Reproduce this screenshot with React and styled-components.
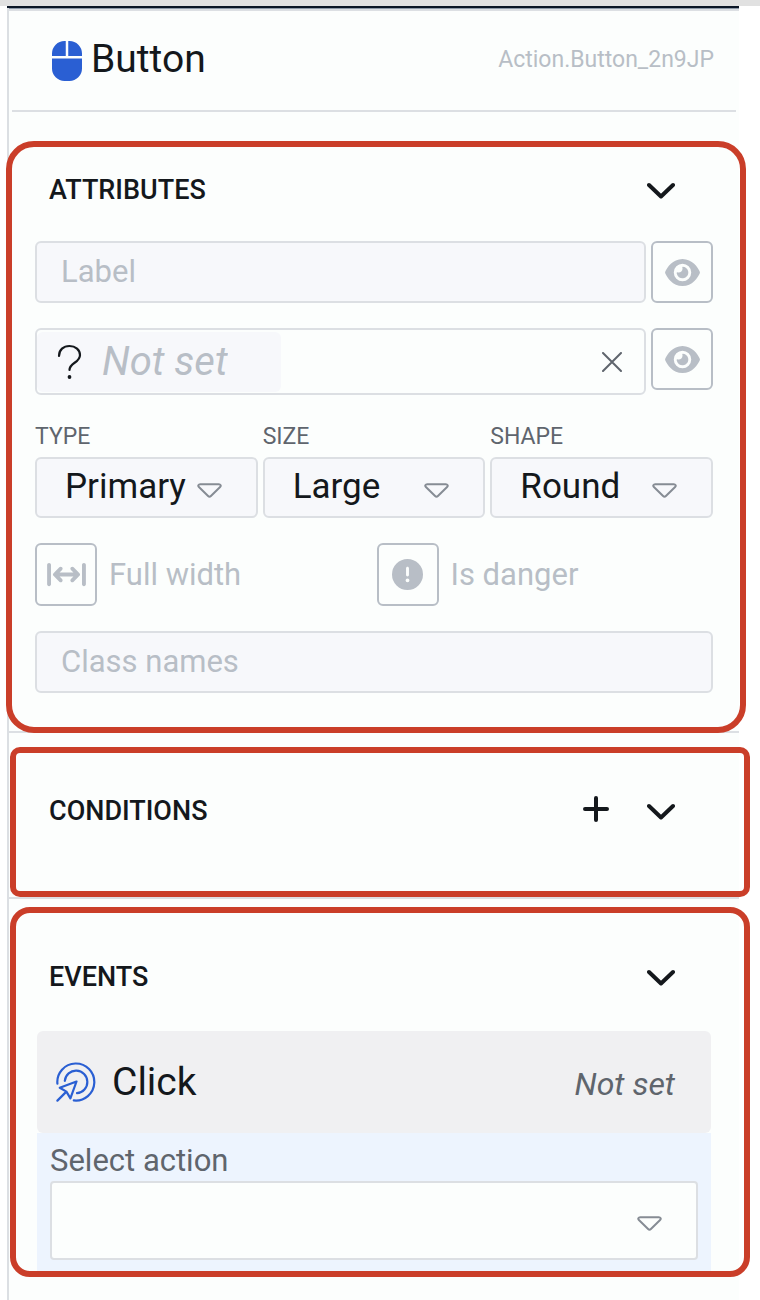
import React from "react";
import styled, { createGlobalStyle } from "styled-components";
import { FaEye, FaCircleExclamation, FaArrowsLeftRightToLine } from "react-icons/fa6";

const GlobalStyle = createGlobalStyle`
  *, *::before, *::after { box-sizing: border-box; }
  body { margin: 0; background: #ffffff; color: #14181c; font-family: Roboto, "Liberation Sans", sans-serif; }
  button, input, select { font: inherit; color: inherit; margin: 0; }
`;

const Page = styled.div`
  display: flex;
  flex-direction: column;
  min-height: 100vh;
  border-top: 6px solid #e1e1e1;
  padding: 0 21px 0 7px;
  overflow-x: clip;
`;

const TopEdge = styled.div`
  height: 2px;
  background: #0b1626;
`;

const Panel = styled.main`
  flex: 1;
  background: #fcfefd;
  border-left: 2px solid #dcdfe3;
  box-shadow: inset 0 1px #8d99a8, inset 0 3px #dcdfe3;
`;

const PanelHeader = styled.header`
  display: flex;
  align-items: center;
  justify-content: space-between;
  height: 104px;
  margin: 0 3px;
  padding: 0 22px 0 40px;
  border-bottom: 2px solid #dcdfe3;
`;

const PanelTitle = styled.h1`
  display: flex;
  align-items: center;
  gap: 9px;
  margin: 0;
  font-size: 39px;
  font-weight: 400;
  line-height: 48px;
  svg { margin-top: 4px; }
`;

const ComponentId = styled.span`
  padding-top: 2px;
  font-size: 23px;
  line-height: 32px;
  color: #b8bec6;
`;

const Section = styled.section`
  position: relative;
  padding: 46px 26px ${(p) => p.$bottom}px;
  border-bottom: ${(p) => (p.$last ? 0 : 2)}px solid #dcdfe3;

  &::after {
    content: "";
    position: absolute;
    z-index: 1;
    inset: ${(p) => p.$frame};
    border: 6px solid #ca3e29;
    border-radius: ${(p) => p.$radius}px;
    pointer-events: none;
  }
`;

const SectionHeader = styled.div`
  display: flex;
  align-items: center;
  height: 64px;
  padding: 0 32px 0 14px;
`;

const SectionTitle = styled.h2`
  flex: 1;
  margin: 0;
  font-size: 27px;
  font-weight: 500;
  line-height: 32px;
`;

const PlainButton = styled.button`
  display: grid;
  place-items: center;
  width: 40px;
  height: 40px;
  margin-left: ${(p) => p.$gap || 0}px;
  padding: 0;
  border: 0;
  background: none;
  color: ${(p) => p.$color || "#14181c"};
`;

const Fields = styled.div`
  display: grid;
  gap: 25px;
  padding-top: 19px;
`;

const Row = styled.div`
  display: flex;
  align-items: flex-start;
  gap: 5px;
`;

const TextInput = styled.input`
  flex: 1;
  min-width: 0;
  width: 100%;
  height: 62px;
  padding: 0 24px 2px;
  border: 2px solid #dcdfe3;
  border-radius: 6px;
  background: #f7f8fb;
  font-size: 31px;
  &::placeholder { color: #b8bec6; opacity: 1; }
`;

const SquareButton = styled.button`
  display: grid;
  place-items: center;
  flex: none;
  width: 62px;
  height: ${(p) => p.$height || 62}px;
  padding: 0;
  border: 2px solid #b8bec6;
  border-radius: 6px;
  background: #fcfefd;
  color: #b8bec6;
  svg { width: ${(p) => p.$icon}px; height: 31px; }
`;

const IconField = styled.div`
  display: flex;
  align-items: center;
  justify-content: space-between;
  flex: 1;
  min-width: 0;
  height: 67px;
  padding-right: 12px;
  border: 2px solid #dcdfe3;
  border-radius: 6px;
`;

const IconValue = styled.div`
  display: flex;
  align-items: center;
  gap: 15px;
  width: 244px;
  height: 60px;
  padding-left: 16px;
  border-radius: 6px;
  background: #f7f8fb;
`;

const IconInput = styled.input`
  width: 126px;
  padding: 0;
  border: 0;
  background: none;
  font-size: 40px;
  font-style: italic;
  line-height: 48px;
  &::placeholder { color: #b8bec6; opacity: 1; }
`;

const Choices = styled.div`
  display: grid;
  grid-template-columns: repeat(3, 1fr);
  gap: 5px;
`;

const Choice = styled.label`
  display: block;
  min-width: 0;
`;

const ChoiceLabel = styled.span`
  display: block;
  padding: 1px 0 4px;
  font-size: 23px;
  line-height: 32px;
  color: #5f656d;
`;

const SelectBox = styled.span`
  position: relative;
  display: block;
  svg {
    position: absolute;
    right: 36px;
    top: 50%;
    margin-top: -5px;
    pointer-events: none;
  }
`;

const Select = styled.select`
  display: block;
  appearance: none;
  width: 100%;
  height: ${(p) => p.$height}px;
  padding: 0 64px 3px 28px;
  border: 2px solid #dcdfe3;
  border-radius: ${(p) => p.$radius}px;
  background: ${(p) => p.$fill};
  font-size: 35px;
`;

const Toggles = styled.div`
  display: grid;
  grid-template-columns: 1fr 1fr;
  gap: 5px;
`;

const Toggle = styled.div`
  display: flex;
  align-items: center;
  gap: 12px;
`;

const ToggleLabel = styled.label`
  font-size: 31px;
  line-height: 40px;
  color: #b8bec6;
`;

const EventBlock = styled.div`
  margin: 22px 2px 0;
`;

const EventHead = styled.div`
  display: flex;
  align-items: center;
  height: 102px;
  padding: 0 36px 0 19px;
  border-radius: 6px;
  background: #f0f0f2;
`;

const EventName = styled.h3`
  flex: 1;
  margin: 0 0 0 16px;
  font-size: 39px;
  font-weight: 400;
  line-height: 48px;
`;

const EventState = styled.em`
  padding-top: 4px;
  font-size: 32px;
  line-height: 40px;
  color: #5f656d;
`;

const EventBody = styled.div`
  padding: 8px 13px 17px;
  background: #edf4fe;
`;

const ActionLabel = styled.label`
  display: block;
  font-size: 31px;
  line-height: 40px;
  color: #5f656d;
`;

const MouseIcon = () => (
  <svg width="30" height="40" viewBox="0 0 384 512" fill="#2a5fd3" aria-hidden="true">
    <path d="M0 352a160 160 0 0 0 160 160h64a160 160 0 0 0 160-160V224H0zM176 0h-16A160 160 0 0 0 0 160v32h176zm48 0h-16v192h176v-32A160 160 0 0 0 224 0z" />
  </svg>
);

const Chevron = () => (
  <svg width="28" height="18" viewBox="0 -2 28 18" fill="none" stroke="currentColor" strokeWidth="4" strokeLinecap="round" strokeLinejoin="round" aria-hidden="true">
    <path d="M2 2 14 13.500 26 2" />
  </svg>
);

const Plus = () => (
  <svg width="26" height="30" viewBox="0 0 26 30" fill="none" stroke="currentColor" strokeWidth="4" strokeLinecap="round" aria-hidden="true">
    <path d="M13 2v22M2 13h22" />
  </svg>
);

const Cross = () => (
  <svg width="20" height="20" viewBox="0 0 20 20" fill="none" stroke="currentColor" strokeWidth="2" strokeLinecap="round" aria-hidden="true">
    <path d="M1 1l18 18M19 1L1 19" />
  </svg>
);

const Triangle = () => (
  <svg width="25" height="15" viewBox="0 0 25 15" fill="none" stroke="#868c94" strokeWidth="2" strokeLinejoin="round" aria-hidden="true">
    <path d="M3.200 1.200h18.600c1.700 0 2.600 1.600 1.300 2.800l-9.200 9c-.8.8-2 .8-2.800 0l-9.200-9C.6 2.800 1.500 1.200 3.200 1.200z" />
  </svg>
);

const Question = () => (
  <svg width="34" height="36" viewBox="0 0 34 36" fill="none" stroke="#14181c" strokeWidth="2.200" strokeLinecap="round" aria-hidden="true">
    <path d="M6 12C6 5.800 10.500 2 16.500 2S27 5.800 27 11c0 8-10.500 7.500-10.500 15" />
    <circle cx="16.500" cy="33" r="1.900" fill="#14181c" stroke="none" />
  </svg>
);

const ClickIcon = () => (
  <svg width="40" height="40" viewBox="0 0 40 40" fill="none" stroke="#2a5fd3" strokeWidth="2.200" strokeLinecap="round" strokeLinejoin="round" aria-hidden="true">
    <path d="M1.400 21.700A18.500 18.500 0 1 1 17.800 38.400" />
    <path d="M8.800 18.800A11.300 11.300 0 1 1 21 31.200" />
    <path d="M20.500 19.500 3.800 25.800l6.600 3.800 4 6.800zM10.400 29.600 1.400 38.600" />
  </svg>
);

const SelectField = ({ label, id, value }) => (
  <Choice htmlFor={id}>
    <ChoiceLabel>{label}</ChoiceLabel>
    <SelectBox>
      <Select id={id} $height={61} $radius={6} $fill="#f7f8fb" defaultValue={value}>
        <option>{value}</option>
      </Select>
      <Triangle />
    </SelectBox>
  </Choice>
);

export default function App() {
  return (
    <Page>
      <GlobalStyle />
      <TopEdge />
      <Panel>
        <PanelHeader>
          <PanelTitle><MouseIcon />Button</PanelTitle>
          <ComponentId>Action.Button_2n9JP</ComponentId>
        </PanelHeader>

        <Section $bottom={38} $frame="29px -7px -2px -3px" $radius={28}>
          <SectionHeader>
            <SectionTitle>ATTRIBUTES</SectionTitle>
            <PlainButton aria-label="Collapse attributes"><Chevron /></PlainButton>
          </SectionHeader>
          <Fields>
            <Row>
              <TextInput aria-label="Label" placeholder="Label" />
              <SquareButton $icon={35} aria-label="Toggle label"><FaEye /></SquareButton>
            </Row>
            <Row>
              <IconField>
                <IconValue>
                  <Question />
                  <IconInput aria-label="Icon" placeholder="Not set" />
                </IconValue>
                <PlainButton $color="#5f656d" aria-label="Clear icon"><Cross /></PlainButton>
              </IconField>
              <SquareButton $icon={35} aria-label="Toggle icon"><FaEye /></SquareButton>
            </Row>
            <Choices>
              <SelectField id="type" label="TYPE" value="Primary" />
              <SelectField id="size" label="SIZE" value="Large" />
              <SelectField id="shape" label="SHAPE" value="Round" />
            </Choices>
            <Toggles>
              <Toggle>
                <SquareButton id="full-width" $icon={39} $height={63}><FaArrowsLeftRightToLine /></SquareButton>
                <ToggleLabel htmlFor="full-width">Full width</ToggleLabel>
              </Toggle>
              <Toggle>
                <SquareButton id="is-danger" $icon={31} $height={63}><FaCircleExclamation /></SquareButton>
                <ToggleLabel htmlFor="is-danger">Is danger</ToggleLabel>
              </Toggle>
            </Toggles>
            <TextInput aria-label="Class names" placeholder="Class names" />
          </Fields>
        </Section>

        <Section $bottom={54} $frame="14px -11px 0 1px" $radius={10}>
          <SectionHeader>
            <SectionTitle>CONDITIONS</SectionTitle>
            <PlainButton aria-label="Add condition"><Plus /></PlainButton>
            <PlainButton $gap={25} aria-label="Collapse conditions"><Chevron /></PlainButton>
          </SectionHeader>
        </Section>

        <Section $last $bottom={0} $frame="8px -11px 0 1px" $radius={20}>
          <SectionHeader>
            <SectionTitle>EVENTS</SectionTitle>
            <PlainButton aria-label="Collapse events"><Chevron /></PlainButton>
          </SectionHeader>
          <EventBlock>
            <EventHead>
              <ClickIcon />
              <EventName>Click</EventName>
              <EventState>Not set</EventState>
            </EventHead>
            <EventBody>
              <ActionLabel htmlFor="action">Select action</ActionLabel>
              <SelectBox>
                <Select id="action" $height={79} $radius={4} $fill="#fcfefd" defaultValue="">
                  <option value="" />
                </Select>
                <Triangle />
              </SelectBox>
            </EventBody>
          </EventBlock>
        </Section>
      </Panel>
    </Page>
  );
}
